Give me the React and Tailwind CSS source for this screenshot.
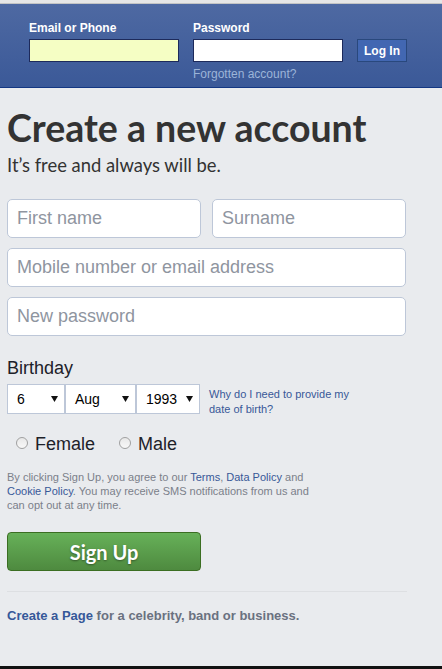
import React from "react";

function Arrow() {
  return (
    <svg width="7" height="6" viewBox="0 0 7 6" className="shrink-0">
      <path d="M0 0 L7 0 L3.5 6 Z" fill="#111" />
    </svg>
  );
}

function Sel({ value, w }) {
  return (
    <div className={`${w} h-[30px] bg-white border border-[#bdc7d8] flex items-center justify-between pl-[9px] pr-[6px] text-[14px] text-black`}>
      <span>{value}</span>
      <Arrow />
    </div>
  );
}

function Radio({ label }) {
  return (
    <label className="flex items-center gap-[7px]">
      <span className="w-[12px] h-[12px] rounded-full border border-[#a0a0a0] bg-gradient-to-b from-[#e8e8e8] to-[#f8f8f8] -mt-[4px]" />
      <span className="text-[18px] text-[#1d2129]">{label}</span>
    </label>
  );
}

export default function App() {
  return (
    <div className="w-[442px] h-[669px] bg-[#e9ebee] flex flex-col overflow-hidden" style={{ fontFamily: '"Liberation Sans", Arial, sans-serif' }}>
      <div className="h-[4px] bg-[#e6e6e6] border-b border-[#c4c4c4] shrink-0" />
      <header className="h-[84px] shrink-0 bg-gradient-to-b from-[#4e69a2] to-[#3b5998] border-b border-[#133783] flex pl-[29px] pt-[17px] gap-[14px]">
        <div className="w-[150px] flex flex-col">
          <span className="text-[12px] leading-[14px] font-bold text-white mb-[4px]">Email or Phone</span>
          <div className="h-[23px] bg-[#f5fec4] border border-[#1d2a5b]" />
        </div>
        <div className="w-[150px] flex flex-col">
          <span className="text-[12px] leading-[14px] font-bold text-white mb-[4px]">Password</span>
          <div className="h-[23px] bg-white border border-[#1d2a5b]" />
          <span className="text-[12px] leading-[14px] text-[#9cb4d8] mt-[5px]">Forgotten account?</span>
        </div>
        <div className="pt-[18px]">
          <div className="w-[50px] h-[23px] bg-[#4267b2] border border-[#29487d] flex items-center justify-center text-[12px] font-bold text-white">Log In</div>
        </div>
      </header>

      <main className="flex-1 pl-[7px] flex flex-col">
        <div className="w-[399px] flex flex-col">
          <h1 className="mt-[18px] text-[37.5px] leading-[44px] font-bold text-[#333333]" style={{ fontFamily: 'Lato, "Open Sans", sans-serif' }}>Create a new account</h1>
          <p className="text-[18.4px] leading-[24px] text-[#333333] mt-[3px]" style={{ fontFamily: 'Lato, "Open Sans", sans-serif' }}>It’s free and always will be.</p>

          <div className="mt-[22px] flex flex-col gap-[10px]">
            <div className="flex gap-[11px]">
              <div className="w-[194px] h-[39px] bg-white border border-[#bdc7d8] rounded-[5px] flex items-center pl-[9px] text-[18px] text-[#8f959f]">First name</div>
              <div className="w-[194px] h-[39px] bg-white border border-[#bdc7d8] rounded-[5px] flex items-center pl-[9px] text-[18px] text-[#8f959f]">Surname</div>
            </div>
            <div className="w-[399px] h-[39px] bg-white border border-[#bdc7d8] rounded-[5px] flex items-center pl-[9px] text-[18px] text-[#8f959f]">Mobile number or email address</div>
            <div className="w-[399px] h-[39px] bg-white border border-[#bdc7d8] rounded-[5px] flex items-center pl-[9px] text-[18px] text-[#8f959f]">New password</div>
          </div>

          <div className="mt-[21px] text-[18px] leading-[22px] text-[#1d2129]">Birthday</div>
          <div className="mt-[5px] flex items-start">
            <div className="flex">
              <Sel value="6" w="w-[58px]" />
              <Sel value="Aug" w="w-[71px]" />
              <Sel value="1993" w="w-[64px]" />
            </div>
            <p className="ml-[9px] mt-[3px] w-[150px] text-[11px] leading-[15px] text-[#385898]">Why do I need to provide my date of birth?</p>
          </div>

          <div className="mt-[14px] flex gap-[24px] pl-[9px]">
            <Radio label="Female" />
            <Radio label="Male" />
          </div>

          <p className="mt-[12px] w-[310px] text-[11px] leading-[14px] text-[#7b808a]">
            By clicking Sign Up, you agree to our <span className="text-[#385898]">Terms</span>, <span className="text-[#385898]">Data Policy</span> and <span className="text-[#385898]">Cookie Policy</span>. You may receive SMS notifications from us and can opt out at any time.
          </p>

          <button className="mt-[20px] w-[194px] h-[39px] rounded-[4px] border border-[#3b6e22] bg-gradient-to-b from-[#67b159] to-[#4e8a3f] text-white text-[20px] font-bold flex items-center justify-center" style={{ fontFamily: 'Lato, "Open Sans", sans-serif', textShadow: '0 1px 2px rgba(0,0,0,0.4)' }}>Sign Up</button>

          <div className="mt-[20px] h-px bg-[#dddfe2] w-[400px]" />

          <p className="mt-[14px] text-[13px] font-bold text-[#6a7180]">
            <span className="text-[#365899]">Create a Page</span> for a celebrity, band or business.
          </p>
        </div>
      </main>
      <div className="h-[3px] bg-[#111111] shrink-0" />
    </div>
  );
}
